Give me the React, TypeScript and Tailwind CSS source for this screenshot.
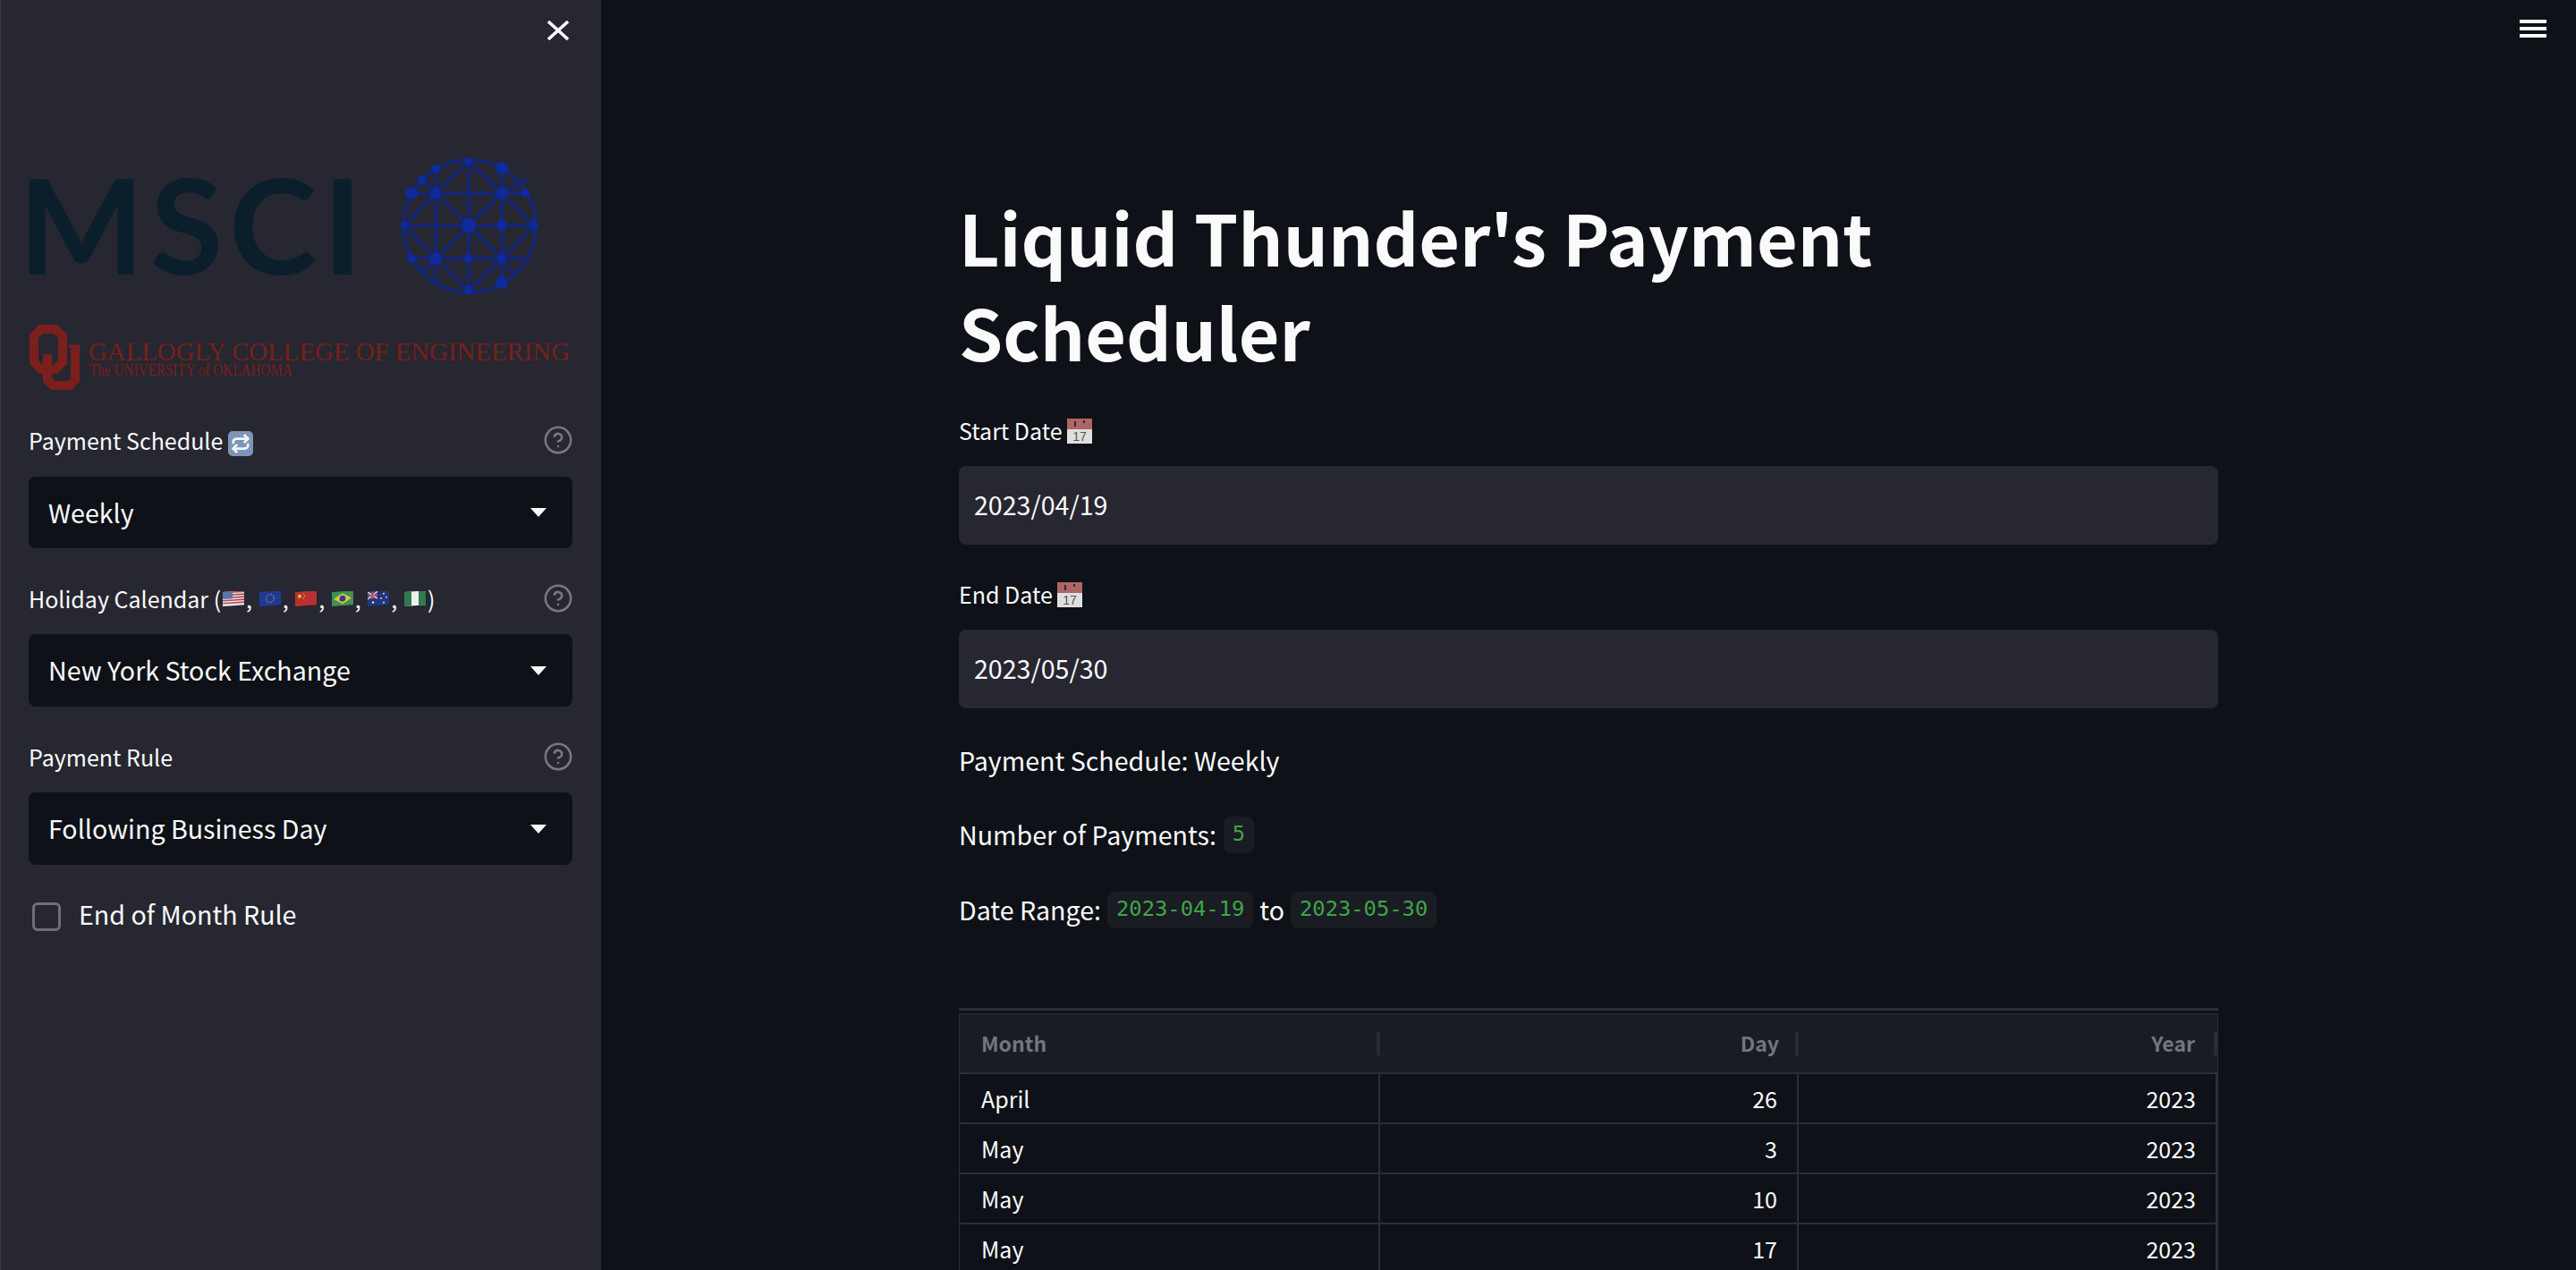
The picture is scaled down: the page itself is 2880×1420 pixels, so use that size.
import { CircleHelp, Repeat } from "lucide-react";

const sans = "font-['Noto_Sans_CJK_SC','Noto_Sans',sans-serif]";

function Flag({ children }: { children: React.ReactNode }) {
  return (
    <svg width="24" height="18" viewBox="0 0 24 18" className="inline-block align-[1px] mx-[2px] rounded-[1px]">
      <g transform="skewY(-4) translate(0 1)">{children}</g>
    </svg>
  );
}

const Us = () => (
  <Flag>
    <rect width="24" height="16" fill="#e8e8ee" />
    {[0, 3, 6, 9, 12].map((y) => (
      <rect key={y} y={y} width="24" height="1.6" fill="#b8494f" />
    ))}
    <rect width="11" height="8" fill="#5b75a8" />
  </Flag>
);
const Eu = () => (
  <Flag>
    <rect width="24" height="16" fill="#1f3a94" />
    <circle cx="12" cy="8" r="4.5" fill="none" stroke="#c9b53c" strokeWidth="1" strokeDasharray="1 1.4" />
  </Flag>
);
const Cn = () => (
  <Flag>
    <rect width="24" height="16" fill="#b8312f" />
    <circle cx="5" cy="5" r="2" fill="#e5c23c" />
    <circle cx="9.5" cy="2.5" r=".7" fill="#e5c23c" />
    <circle cx="10.5" cy="5" r=".7" fill="#e5c23c" />
    <circle cx="9.5" cy="7.5" r=".7" fill="#e5c23c" />
  </Flag>
);
const Br = () => (
  <Flag>
    <rect width="24" height="16" fill="#3f9154" />
    <polygon points="12,2 22,8 12,14 2,8" fill="#e0c53e" />
    <circle cx="12" cy="8" r="3.4" fill="#27458f" />
  </Flag>
);
const Au = () => (
  <Flag>
    <rect width="24" height="16" fill="#24357f" />
    <rect width="11" height="8" fill="#4a5596" />
    <path d="M0 0 11 8M11 0 0 8" stroke="#e9d9dd" strokeWidth="1.2" />
    <path d="M5.5 0V8M0 4H11" stroke="#c4434e" strokeWidth="1.6" />
    <circle cx="6" cy="12" r="1.2" fill="#eee" />
    <circle cx="18" cy="3" r=".9" fill="#eee" />
    <circle cx="21" cy="7" r=".9" fill="#eee" />
    <circle cx="15" cy="8" r=".9" fill="#eee" />
    <circle cx="18" cy="13" r=".9" fill="#eee" />
  </Flag>
);
const Ng = () => (
  <Flag>
    <rect width="24" height="16" fill="#eef0ee" />
    <rect width="8" height="16" fill="#2f7a4e" />
    <rect x="16" width="8" height="16" fill="#2f7a4e" />
  </Flag>
);

function CalendarEmoji() {
  return (
    <svg width="28" height="28" viewBox="0 0 28 28" className="inline-block align-[-4px] ml-[5px]">
      <rect width="28" height="28" fill="#dfdfdf" />
      <rect width="28" height="12" fill="#ad6566" />
      <path d="M9 3v6M19 2v3" stroke="#33272a" strokeWidth="2" />
      <text x="14" y="25" textAnchor="middle" fontSize="14" fill="#555" fontFamily="Liberation Sans">17</text>
    </svg>
  );
}

function RepeatEmoji() {
  return (
    <span className="inline-flex w-[28px] h-[28px] rounded-[5px] bg-[#7b96b8] items-center justify-center align-[-4px] ml-[6px]">
      <Repeat size={22} color="#f2f4f8" strokeWidth={3} />
    </span>
  );
}

function Caret() {
  return (
    <svg width="18" height="10" viewBox="0 0 18 10">
      <polygon points="0,0 18,0 9,10" fill="#fafafa" />
    </svg>
  );
}

function SidebarField({ label, value, first }: { label: React.ReactNode; value: string; first?: boolean }) {
  return (
    <div className={first ? "" : "mt-[36px]"}>
      <div className="h-[40px] flex items-center justify-between">
        <div className="text-[25px] leading-[40px] text-[#fafafa] whitespace-nowrap">{label}</div>
        <CircleHelp size={34} color="#777880" strokeWidth={1.8} className="mr-[-1px]" />
      </div>
      <div className={first ? "mt-[21px] h-[80px] rounded-[8px] bg-[#0e1117] flex items-center justify-between pl-[22px] pr-[29px]" : "mt-[20px] h-[81px] rounded-[8px] bg-[#0e1117] flex items-center justify-between pl-[22px] pr-[29px]"}>
        <span className="text-[28.6px] text-[#fafafa]">{value}</span>
        <Caret />
      </div>
    </div>
  );
}

function Logos() {
  const nodes: [number, number, number][] = [
    [524, 180, 4], [561, 188, 7], [487, 189, 5], [472, 201, 5], [460, 216, 7], [487, 216, 6], [561, 216, 6], [587, 216, 5],
    [452, 252, 4], [524, 252, 8], [561, 252, 6], [597, 252, 5], [460, 289, 5], [487, 289, 7], [524, 289, 5], [561, 289, 5],
    [561, 316, 7], [524, 325, 5],
  ];
  return (
    <>
      <svg width="639" height="190" viewBox="1 150 639 190" className="block mt-[105px] -ml-[31px]">
        <text x="21" y="307" fontFamily="Lato" fontWeight="700" fontSize="148" fill="#0a1e2c" textLength="384" lengthAdjust="spacing">MSCI</text>
        <g stroke="#12267f" strokeWidth="3.5" fill="none">
          <ellipse cx="525" cy="253" rx="74" ry="74" />
          <path d="M487 189V316M524 180V325M561 188V316M460 216H587M452 252H597M460 289H587" />
          <path d="M524 180 487 216 452 252 487 289 524 325 561 289 597 252 561 216 524 180" />
          <path d="M472 201 487 216 524 252 561 289 576 308M589 200 561 216 524 252 487 289 472 306" />
        </g>
        <g fill="#0f2a9c">
          {nodes.map(([x, y, r]) => (
            <circle key={`${x}-${y}`} cx={x} cy={y} r={r} />
          ))}
        </g>
      </svg>
      <svg width="608" height="80" viewBox="32 360 608 80" className="block mt-[20px]">
        <g fill="none" stroke="#7a1f1b" strokeWidth="10">
          <path d="M46 368H62L70 376V405L62 413H46L38 405V376Z" />
          <path d="M53 396V425L59 431H78L84 425V387" />
        </g>
        <path d="M77 387H90" stroke="#7a1f1b" strokeWidth="3" />
        <text x="99" y="403" fontFamily="Liberation Serif" fontSize="29" fill="#7a1f1b" textLength="538" lengthAdjust="spacingAndGlyphs">GALLOGLY COLLEGE OF ENGINEERING</text>
        <text x="100" y="420" fontFamily="Liberation Serif" fontSize="18" fill="#7a1f1b" textLength="227" lengthAdjust="spacingAndGlyphs">The UNIVERSITY of OKLAHOMA</text>
      </svg>
    </>
  );
}

function Sidebar() {
  return (
    <aside className="w-[672px] h-full shrink-0 bg-[#262730] border-l border-[#3c3d46] pl-[31px] pr-[32px] pt-[23px]">
      <div className="flex justify-end pr-[4px] h-[22px]">
        <svg width="24" height="22" viewBox="0 0 24 22">
          <path d="M1 1 23 21M23 1 1 21" stroke="#fafafa" strokeWidth="3.5" />
        </svg>
      </div>
      <Logos />
      <div className="mt-[32px]">
        <SidebarField first label={<>Payment Schedule<RepeatEmoji /></>} value="Weekly" />
        <SidebarField
          label={
            <>
              Holiday Calendar (<Us />, <Eu />, <Cn />, <Br />, <Au />, <Ng />)
            </>
          }
          value="New York Stock Exchange"
        />
        <SidebarField label="Payment Rule" value="Following Business Day" />
        <div className="mt-[42px] h-[32px] flex items-center gap-[20px] pl-[4px]">
          <div className="w-[32px] h-[32px] rounded-[6px] border-[3px] border-[#6f7077] bg-[#262730]" />
          <span className="text-[28.6px] text-[#fafafa] pb-[5px]">End of Month Rule</span>
        </div>
      </div>
    </aside>
  );
}

function DateField({ label, value, className }: { label: string; value: string; className: string }) {
  return (
    <div className={className}>
      <div className="h-[40px] text-[25px] leading-[40px] text-[#fafafa]">{label}<CalendarEmoji /></div>
      <div className="mt-[20px] h-[88px] rounded-[8px] bg-[#262730] flex items-center pl-[17px] pb-[2px] text-[28.6px] text-[#fafafa]">{value}</div>
    </div>
  );
}

function Code({ children }: { children: string }) {
  return (
    <code className="inline-flex h-[41px] items-center px-[10px] rounded-[8px] bg-[#1a1c24] text-[#3fa648] text-[23.8px] font-['DejaVu_Sans_Mono','Liberation_Mono',monospace]">
      {children}
    </code>
  );
}

const rows: [string, number, number][] = [
  ["April", 26, 2023],
  ["May", 3, 2023],
  ["May", 10, 2023],
  ["May", 17, 2023],
];

function Grip() {
  return <div className="w-[4px] h-[26px] bg-[#2a2c35] shrink-0" />;
}

function Table() {
  return (
    <div className="mt-[3px] border border-[#2c2e35] border-b-0 w-full">
      <div className="grid grid-cols-[470px_468px_1fr] h-[67px] bg-[#1a1c24] border-b-2 border-[#2c2e35] text-[23px] font-bold text-[#73757f]">
        <div className="flex items-center justify-between pl-[24px]">
          <span>Month</span>
          <Grip />
        </div>
        <div className="flex items-center justify-end gap-[18px]">
          <span>Day</span>
          <Grip />
        </div>
        <div className="flex items-center justify-end gap-[21px]">
          <span>Year</span>
          <Grip />
        </div>
      </div>
      {rows.map(([m, d, y], i) => (
        <div key={i} className="grid grid-cols-[470px_468px_1fr] h-[56px] border-b-2 border-[#2c2e35] text-[25px] text-[#fafafa]">
          <div className="border-r-2 border-[#2c2e35] flex items-center pl-[24px] pt-[2px]">{m}</div>
          <div className="border-r-2 border-[#2c2e35] flex items-center justify-end pr-[22px] pt-[2px]">{d}</div>
          <div className="border-r-2 border-[#2c2e35] flex items-center justify-end pr-[22px] pt-[2px]">{y}</div>
        </div>
      ))}
    </div>
  );
}

export default function App() {
  return (
    <div className={`relative w-[2880px] h-[1420px] overflow-hidden flex bg-[#0e1117] ${sans}`}>
      <Sidebar />
      <main className="flex-1 h-full flex justify-center">
        <div className="w-[1408px] pt-[211px]">
          <h1 className="text-[78.8px] leading-[106px] font-bold text-[#fafafa] w-[1200px]">Liquid Thunder's Payment Scheduler</h1>
          <DateField className="mt-[38px]" label="Start Date" value="2023/04/19" />
          <DateField className="mt-[35px]" label="End Date" value="2023/05/30" />
          <div className="mt-[32px] h-[52px] flex items-center text-[28.6px] text-[#fafafa]">Payment Schedule: Weekly</div>
          <div className="mt-[31px] h-[52px] flex items-center gap-[8px] text-[28.6px] text-[#fafafa]">
            <span>Number of Payments:</span>
            <Code>5</Code>
          </div>
          <div className="mt-[32px] h-[52px] flex items-center gap-[7px] text-[28.6px] text-[#fafafa]">
            <span>Date Range:</span>
            <Code>2023-04-19</Code>
            <span>to</span>
            <Code>2023-05-30</Code>
          </div>
          <div className="mt-[84px] h-[3px] bg-[#2c2e35]" />
          <Table />
        </div>
      </main>
      <div className="absolute right-[33px] top-[22px] w-[30px] flex flex-col gap-[4px]">
        <div className="h-[4px] bg-[#fafafa]" />
        <div className="h-[4px] bg-[#fafafa]" />
        <div className="h-[4px] bg-[#fafafa]" />
      </div>
    </div>
  );
}
